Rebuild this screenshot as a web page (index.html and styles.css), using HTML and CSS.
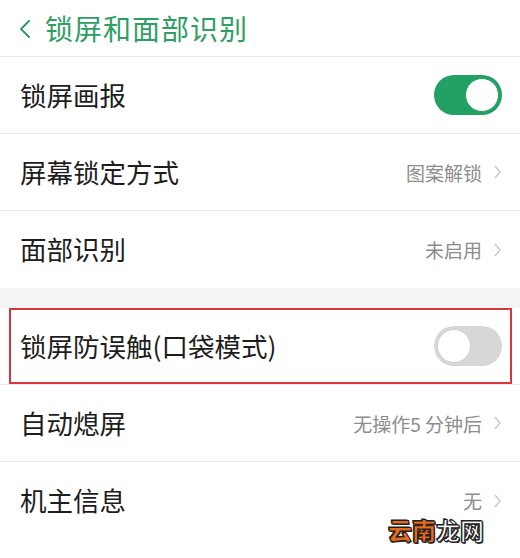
FILE: index.html
```html
<!DOCTYPE html>
<html lang="zh-CN">
<head>
    <meta charset="UTF-8">
    <meta name="viewport" content="width=device-width, initial-scale=1.0">
    <title>锁屏和面部识别</title>
    <link rel="stylesheet" href="styles.css">
</head>
<body>
    <main class="page">
        <header class="top_bar">
            <svg class="back" width="14" height="22" viewBox="0 0 14 22">
                <polyline points="11,3 3,11 11,19" fill="none" stroke="#2e9e63" stroke-width="2" stroke-linecap="round" stroke-linejoin="round"/>
            </svg>
            <h1>锁屏和面部识别</h1>
        </header>

        <section class="group">
            <div class="row">
                <span class="label">锁屏画报</span>
                <span class="switch on"><i></i></span>
            </div>
            <div class="row">
                <span class="label">屏幕锁定方式</span>
                <span class="value">图案解锁<svg class="arrow" width="9" height="16" viewBox="0 0 9 16"><polyline points="2,2 7,8 2,14" fill="none" stroke="#c9c9c9" stroke-width="1.5"/></svg></span>
            </div>
            <div class="row">
                <span class="label">面部识别</span>
                <span class="value">未启用<svg class="arrow" width="9" height="16" viewBox="0 0 9 16"><polyline points="2,2 7,8 2,14" fill="none" stroke="#c9c9c9" stroke-width="1.5"/></svg></span>
            </div>
        </section>

        <div class="spacer"></div>

        <section class="group">
            <div class="row marked">
                <span class="label">锁屏防误触(口袋模式)</span>
                <span class="switch"><i></i></span>
            </div>
            <div class="row">
                <span class="label">自动熄屏</span>
                <span class="value">无操作5 分钟后<svg class="arrow" width="9" height="16" viewBox="0 0 9 16"><polyline points="2,2 7,8 2,14" fill="none" stroke="#c9c9c9" stroke-width="1.5"/></svg></span>
            </div>
            <div class="row">
                <span class="label">机主信息</span>
                <span class="value">无<svg class="arrow" width="9" height="16" viewBox="0 0 9 16"><polyline points="2,2 7,8 2,14" fill="none" stroke="#c9c9c9" stroke-width="1.5"/></svg></span>
            </div>
        </section>

        <div class="watermark"><b>云南</b>龙网</div>
    </main>
</body>
</html>
```

FILE: styles.css
```css
* {
    margin: 0;
    padding: 0;
    box-sizing: border-box;
}
body {
    background-color: #fff;
    font-family: "Noto Sans CJK SC", "Noto Sans", sans-serif;
    color: #1d1d1d;
}
.page {
    position: relative;
    width: 520px;
    height: 558px;
    overflow: hidden;
}
.top_bar {
    height: 57px;
    display: flex;
    align-items: center;
    padding-left: 18px;
    border-bottom: 1px solid #ebebeb;
}
.back {
    margin-right: 13px;
    margin-top: 2px;
}
.top_bar h1 {
    font-size: 28px;
    font-weight: 400;
    color: #2e9e63;
    line-height: 1;
    letter-spacing: 1px;
}
.row {
    position: relative;
    height: 77px;
    display: flex;
    align-items: center;
    justify-content: space-between;
    padding: 0 18px 0 20px;
    border-bottom: 1px solid #ececec;
}
.group .row:last-child {
    border-bottom: none;
}
.label {
    font-size: 26.5px;
    line-height: 1;
}
.value {
    display: flex;
    align-items: center;
    font-size: 19px;
    line-height: 1;
    color: #8c8c8c;
}
.arrow {
    margin-left: 11px;
}
.spacer {
    height: 20px;
    background-color: #f4f4f4;
}
.switch {
    width: 68px;
    height: 40px;
    border-radius: 20px;
    background-color: #d7d7d7;
    display: flex;
    align-items: center;
    padding: 0 3px;
}
.switch i {
    width: 34px;
    height: 34px;
    border-radius: 50%;
    background-color: #fff;
    border: 1px solid #cfcfcf;
}
.switch.on {
    background-color: #23a063;
    justify-content: flex-end;
}
.switch.on i {
    border-color: #23a063;
}
.marked::after {
    content: "";
    position: absolute;
    left: 9px;
    right: 8px;
    top: 0;
    bottom: 0;
    border: 2px solid #d8363c;
}
.watermark {
    position: absolute;
    left: 388px;
    top: 518px;
    font-size: 24px;
    font-weight: 700;
    line-height: 1;
    color: #fff;
    -webkit-text-stroke: 1px #222;
    text-shadow: 1px 1px 0 #222, -1px -1px 0 #222;
}
.watermark b {
    color: #e8691c;
}
```
